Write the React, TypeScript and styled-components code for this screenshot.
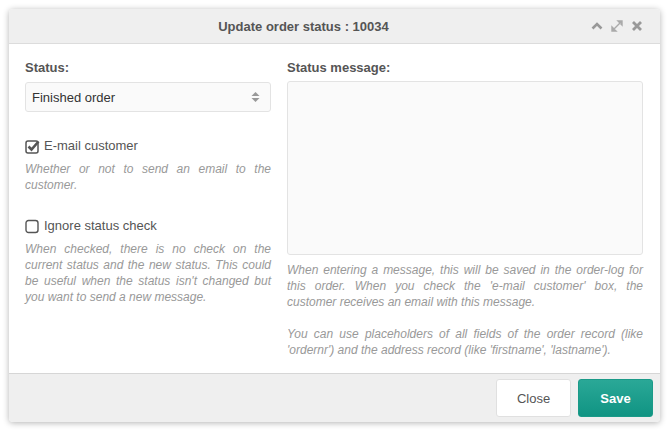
import React from "react";
import styled, { createGlobalStyle } from "styled-components";

const GlobalStyle = createGlobalStyle`
  body {
    margin: 0;
    background: #ffffff;
    font-family: "Liberation Sans", Arial, sans-serif;
  }
`;

const Page = styled.div`
  padding: 9px 8px 9px 9px;
`;

const Dialog = styled.div`
  width: 651px;
  height: 413px;
  display: flex;
  flex-direction: column;
  background: #fff;
  border-radius: 4px;
  box-shadow: 0 1px 6px rgba(0, 0, 0, 0.3);
  overflow: hidden;
`;

const TitleBar = styled.div`
  position: relative;
  height: 34px;
  flex: none;
  display: flex;
  align-items: center;
  background: #efefef;
  border-bottom: 1px solid #dcdcdc;
`;

const Title = styled.div`
  flex: 1;
  padding-right: 62px;
  text-align: center;
  font-size: 13px;
  font-weight: bold;
  color: #555;
`;

const TitleTools = styled.div`
  position: absolute;
  right: 16px;
  top: 0;
  bottom: 0;
  display: flex;
  align-items: center;
  gap: 6px;

  svg {
    flex: none;
  }
`;

const Body = styled.div`
  flex: 1;
  display: grid;
  grid-template-columns: 246px 356px;
  column-gap: 16px;
  padding: 16px 17px 0 16px;
`;

const Column = styled.div`
  display: flex;
  flex-direction: column;
`;

const Label = styled.div`
  font-size: 13px;
  font-weight: bold;
  color: #555;
  line-height: 16px;
  margin-bottom: 6px;
`;

const Select = styled.div`
  height: 30px;
  box-sizing: border-box;
  border: 1px solid #e3e3e3;
  border-radius: 3px;
  background: #fafafa;
  display: flex;
  align-items: center;
  justify-content: space-between;
  padding: 0 10px 0 6px;
  font-size: 13px;
  color: #333;
`;

const CheckRow = styled.label<{ $top: number }>`
  display: flex;
  align-items: center;
  gap: 4px;
  margin-top: ${(p) => p.$top}px;
  font-size: 13px;
  color: #555;
  line-height: 16px;
`;

const Help = styled.p<{ $top?: number }>`
  margin: ${(p) => p.$top ?? 7}px 0 0;
  font-size: 12px;
  font-style: italic;
  line-height: 16px;
  color: #999;
  text-align: justify;
`;

const TextArea = styled.div`
  height: 174px;
  box-sizing: border-box;
  border: 1px solid #e3e3e3;
  border-radius: 3px;
  background: #fafafa;
  margin-top: -1px;
`;

const Footer = styled.div`
  height: 48px;
  flex: none;
  background: #efefef;
  border-top: 1px solid #d6d6d6;
  display: flex;
  justify-content: flex-end;
  align-items: center;
  gap: 7px;
  padding: 0 7px;
`;

const Button = styled.button<{ $primary?: boolean }>`
  width: 75px;
  height: 38px;
  border-radius: 3px;
  font-family: "Liberation Sans", Arial, sans-serif;
  font-size: 13px;
  border: 1px solid ${(p) => (p.$primary ? "#1a9a88" : "#e0e0e0")};
  background: ${(p) =>
    p.$primary ? "linear-gradient(#2aa897, #109483)" : "#ffffff"};
  color: ${(p) => (p.$primary ? "#fff" : "#555")};
  font-weight: ${(p) => (p.$primary ? "bold" : "normal")};
`;

const CheckedBox = () => (
  <svg width="15" height="15" viewBox="0 0 15 15">
    <rect x="1" y="2" width="12" height="12" rx="2" fill="none" stroke="#555" strokeWidth="1.5" />
    <path d="M3.5 7.5 L6.5 10.5 L13.5 2.5" fill="none" stroke="#555" strokeWidth="2.6" />
  </svg>
);

const EmptyBox = () => (
  <svg width="15" height="15" viewBox="0 0 15 15">
    <rect x="1" y="1.5" width="12" height="12" rx="2.5" fill="none" stroke="#555" strokeWidth="1.4" />
  </svg>
);

const SortArrows = () => (
  <svg width="9" height="12" viewBox="0 0 9 12">
    <path d="M0.5 5 L4.5 1 L8.5 5 Z M0.5 7 L4.5 11 L8.5 7 Z" fill="#999" />
  </svg>
);

const Tools = () => (
  <TitleTools>
    <svg width="14" height="14" viewBox="0 0 14 14">
      <path d="M2.5 9.5 L7 5 L11.5 9.5" fill="none" stroke="#999" strokeWidth="2.6" />
    </svg>
    <svg width="14" height="14" viewBox="0 0 14 14">
      <path d="M8 2 H12 V6 Z M6 12 H2 V8 Z M11 3 L3 11" fill="#aaa" stroke="#aaa" strokeWidth="1.4" />
    </svg>
    <svg width="14" height="14" viewBox="0 0 14 14">
      <path d="M3 3 L11 11 M11 3 L3 11" stroke="#999" strokeWidth="2.8" />
    </svg>
  </TitleTools>
);

export default function App() {
  return (
    <Page>
      <GlobalStyle />
      <Dialog>
        <TitleBar>
          <Title>Update order status : 10034</Title>
          <Tools />
        </TitleBar>
        <Body>
          <Column>
            <Label>Status:</Label>
            <Select>
              Finished order
              <SortArrows />
            </Select>
            <CheckRow $top={26}>
              <CheckedBox />
              E-mail customer
            </CheckRow>
            <Help>Whether or not to send an email to the customer.</Help>
            <CheckRow $top={25}>
              <EmptyBox />
              Ignore status check
            </CheckRow>
            <Help $top={7}>
              When checked, there is no check on the current status and the new
              status. This could be useful when the status isn't changed but you
              want to send a new message.
            </Help>
          </Column>
          <Column>
            <Label>Status message:</Label>
            <TextArea />
            <Help $top={7}>
              When entering a message, this will be saved in the order-log for
              this order. When you check the 'e-mail customer' box, the customer
              receives an email with this message.
            </Help>
            <Help $top={16}>
              You can use placeholders of all fields of the order record (like
              'ordernr') and the address record (like 'firstname', 'lastname').
            </Help>
          </Column>
        </Body>
        <Footer>
          <Button>Close</Button>
          <Button $primary>Save</Button>
        </Footer>
      </Dialog>
    </Page>
  );
}
